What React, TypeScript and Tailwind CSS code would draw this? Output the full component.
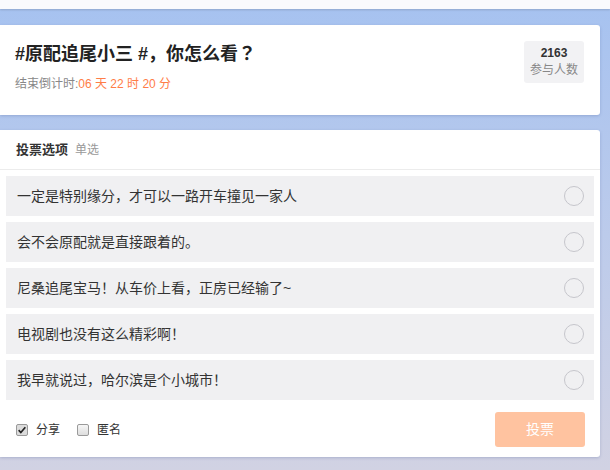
import React, { useState } from "react";

const font = "font-['Liberation_Sans','Noto_Sans_CJK_SC',sans-serif]";

const options = [
  "一定是特别缘分，才可以一路开车撞见一家人",
  "会不会原配就是直接跟着的。",
  "尼桑追尾宝马！从车价上看，正房已经输了~",
  "电视剧也没有这么精彩啊！",
  "我早就说过，哈尔滨是个小城市！",
];

const CheckBox: React.FC<{ checked: boolean; label: string; onToggle: () => void }> = ({
  checked,
  label,
  onToggle,
}) => (
  <label className="flex items-center cursor-pointer select-none" onClick={onToggle}>
    <span
      className={`flex h-[12px] w-[12px] items-center justify-center rounded-[2px] border border-[#9a9a9a] ${
        checked ? "bg-[#dcdcdc]" : "bg-gradient-to-b from-[#f6f6f6] to-[#dedede]"
      }`}
    >
      {checked && (
        <svg viewBox="0 0 12 12" className="h-[10px] w-[10px]">
          <path d="M2 6.2 L4.6 9 L10 2.6" fill="none" stroke="#222" strokeWidth="2" />
        </svg>
      )}
    </span>
    <span className="ml-[8px] text-[12px] text-[#333]">{label}</span>
  </label>
);

export default function App() {
  const [picked, setPicked] = useState<number | null>(null);
  const [share, setShare] = useState(true);
  const [anon, setAnon] = useState(false);

  return (
    <div
      className={`${font} [text-spacing-trim:space-all] flex h-[470px] w-[610px] flex-col overflow-hidden bg-gradient-to-b from-[#a6c2f0] via-[#bccbeb] to-[#d1d2e3]`}
    >
      {/* top nav strip */}
      <div className="h-[9px] shrink-0 bg-[#f9fafd] shadow-[0_1px_2px_rgba(0,0,0,0.15)]" />

      {/* topic header */}
      <div className="mt-[16px] flex h-[90px] w-[600px] shrink-0 justify-between rounded-r-[3px] bg-white pl-[15px] pr-[16px] pt-[15px] shadow-[0_1px_3px_rgba(60,80,140,0.25)]">
        <div>
          <h1 className="text-[18px] font-bold leading-[24px] text-[#222]">
            #原配追尾小三 #，你怎么看
            <span className="font-['Noto_Sans_CJK_TC',sans-serif]">？</span>
          </h1>
          <p className="mt-[10px] text-[12px] leading-[16px] text-[#888]">
            结束倒计时:<span className="text-[#ff7d47]">06 天 22 时 20 分</span>
          </p>
        </div>
        <div className="mt-px flex h-[42px] w-[60px] flex-col items-center rounded-[3px] bg-[#f2f2f4] pt-[4px]">
          <span className="text-[12px] font-bold leading-[17px] text-[#333]">2163</span>
          <span className="text-[12px] leading-[17px] text-[#888]">参与人数</span>
        </div>
      </div>

      {/* vote card */}
      <div className="mt-[15px] flex h-[327px] w-[600px] shrink-0 flex-col rounded-r-[3px] bg-white shadow-[0_1px_3px_rgba(60,80,140,0.25)]">
        <div className="flex h-[40px] items-center border-b border-[#ececec] px-[16px]">
          <span className="text-[13px] font-bold text-[#333]">投票选项</span>
          <span className="ml-[7px] text-[12px] text-[#999]">单选</span>
        </div>

        <div className="flex flex-col gap-[6px] px-[6px] pt-[6px]">
          {options.map((text, i) => (
            <div
              key={i}
              onClick={() => setPicked(i)}
              className="flex h-[40px] cursor-pointer items-center justify-between bg-[#f0f0f2] pl-[11px] pr-[10px]"
            >
              <span className="text-[14px] text-[#333]">{text}</span>
              <span
                className={`flex h-[20px] w-[20px] items-center justify-center rounded-full border ${
                  picked === i ? "border-[#ff8c5a]" : "border-[#c6c6cc]"
                }`}
              >
                {picked === i && <span className="h-[10px] w-[10px] rounded-full bg-[#ff8c5a]" />}
              </span>
            </div>
          ))}
        </div>

        <div className="mt-[12px] flex items-center justify-between pl-[16px] pr-[15px]">
          <div className="flex items-center gap-[17px]">
            <CheckBox checked={share} label="分享" onToggle={() => setShare(!share)} />
            <CheckBox checked={anon} label="匿名" onToggle={() => setAnon(!anon)} />
          </div>
          <button
            className={`h-[35px] w-[90px] rounded-[3px] text-[14px] text-white ${
              picked === null ? "bg-[#ffc3a0]" : "bg-[#ff8c5a]"
            }`}
          >
            投票
          </button>
        </div>
      </div>
    </div>
  );
}
